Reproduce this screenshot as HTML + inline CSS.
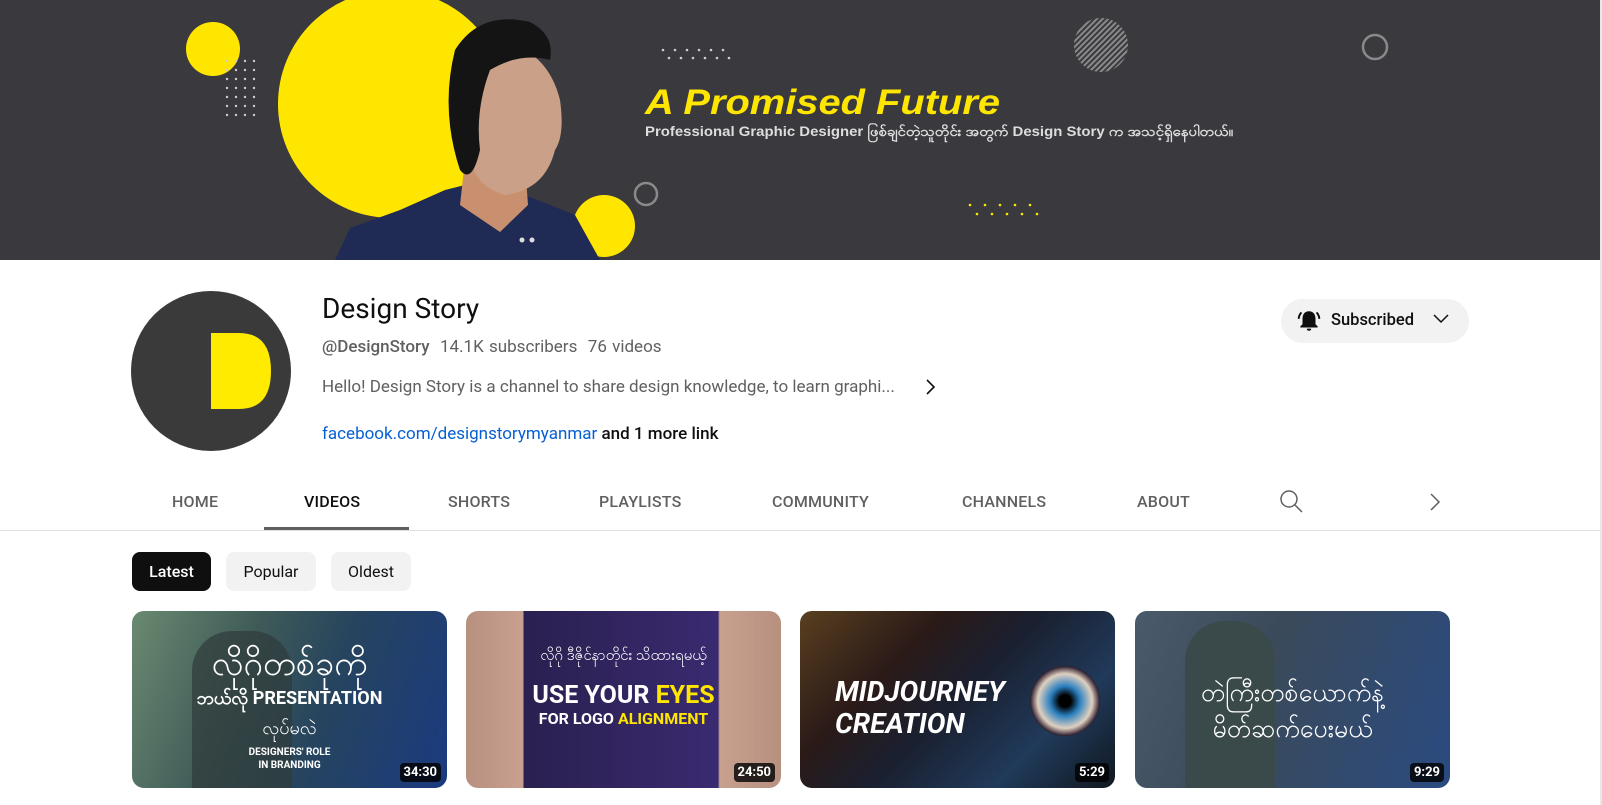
<!DOCTYPE html>
<html><head><meta charset="utf-8"><style>
*{margin:0;padding:0;box-sizing:border-box}
html,body{width:1602px;height:805px;overflow:hidden}
body{background:#fff;font-family:"Roboto","Liberation Sans","Noto Sans CJK SC",sans-serif;position:relative;color:#0f0f0f}
.a{position:absolute}
.banner{left:0;top:0;width:1600px;height:260px;background:#3a393e;overflow:hidden}
.tab{position:absolute;top:492px;font-size:16px;font-weight:500;color:#606060;letter-spacing:.2px}
.chip{position:absolute;top:552px;height:39px;border-radius:8px;background:#f2f2f2;font-size:16px;line-height:39px;text-align:center}
.th{position:absolute;top:611px;width:315px;height:177px;border-radius:12px;overflow:hidden}
.dur{position:absolute;right:6px;bottom:6px;background:rgba(0,0,0,.8);color:#fff;font-size:13px;font-weight:bold;padding:2px 4px;border-radius:4px}
</style></head><body>
<div class="a banner">
<svg width="1600" height="260" style="position:absolute;left:0;top:0">
<defs><pattern id="st" width="4" height="4" patternUnits="userSpaceOnUse" patternTransform="rotate(45)"><rect width="2" height="4" fill="#8a8a8a"/></pattern></defs>
<circle cx="213" cy="49" r="27" fill="#ffe600"/>
<circle cx="392" cy="104" r="114" fill="#ffe600"/>
<circle cx="604" cy="226" r="31" fill="#ffe600"/>
<circle cx="646" cy="194" r="11" fill="none" stroke="#8a8a8a" stroke-width="2.5"/>
<circle cx="1101" cy="45" r="27" fill="url(#st)"/>
<circle cx="1375" cy="47" r="12" fill="none" stroke="#8a8a8a" stroke-width="2.5"/>
<g fill="#ccc">
<circle cx="227" cy="61" r="1.2"/><circle cx="236" cy="61" r="1.2"/><circle cx="245" cy="61" r="1.2"/><circle cx="254" cy="61" r="1.2"/>
<circle cx="227" cy="70" r="1.2"/><circle cx="236" cy="70" r="1.2"/><circle cx="245" cy="70" r="1.2"/><circle cx="254" cy="70" r="1.2"/>
<circle cx="227" cy="79" r="1.2"/><circle cx="236" cy="79" r="1.2"/><circle cx="245" cy="79" r="1.2"/><circle cx="254" cy="79" r="1.2"/>
<circle cx="227" cy="88" r="1.2"/><circle cx="236" cy="88" r="1.2"/><circle cx="245" cy="88" r="1.2"/><circle cx="254" cy="88" r="1.2"/>
<circle cx="227" cy="97" r="1.2"/><circle cx="236" cy="97" r="1.2"/><circle cx="245" cy="97" r="1.2"/><circle cx="254" cy="97" r="1.2"/>
<circle cx="227" cy="106" r="1.2"/><circle cx="236" cy="106" r="1.2"/><circle cx="245" cy="106" r="1.2"/><circle cx="254" cy="106" r="1.2"/>
<circle cx="227" cy="115" r="1.2"/><circle cx="236" cy="115" r="1.2"/><circle cx="245" cy="115" r="1.2"/><circle cx="254" cy="115" r="1.2"/>
<circle cx="663" cy="50" r="1.3"/><circle cx="675" cy="50" r="1.3"/><circle cx="687" cy="50" r="1.3"/><circle cx="699" cy="50" r="1.3"/><circle cx="711" cy="50" r="1.3"/><circle cx="723" cy="50" r="1.3"/>
<circle cx="669" cy="58" r="1.3"/><circle cx="681" cy="58" r="1.3"/><circle cx="693" cy="58" r="1.3"/><circle cx="705" cy="58" r="1.3"/><circle cx="717" cy="58" r="1.3"/><circle cx="729" cy="58" r="1.3"/>
</g>
<g fill="#ffe600">
<circle cx="970" cy="205" r="1.3"/><circle cx="985" cy="205" r="1.3"/><circle cx="1000" cy="205" r="1.3"/><circle cx="1015" cy="205" r="1.3"/><circle cx="1030" cy="205" r="1.3"/>
<circle cx="977" cy="214" r="1.3"/><circle cx="992" cy="214" r="1.3"/><circle cx="1007" cy="214" r="1.3"/><circle cx="1022" cy="214" r="1.3"/><circle cx="1037" cy="214" r="1.3"/>
</g>
<path d="M335 260 L350 228 L400 210 L445 190 L485 180 L525 195 L575 215 L600 260 Z" fill="#1f2a55"/>
<path d="M465 160 L460 205 L500 232 L528 205 L525 165 Z" fill="#c9906f"/>
<path d="M480 40 Q545 40 560 100 Q565 135 555 150 Q545 190 505 195 Q470 185 470 150 Q455 110 480 40 Z" fill="#caa088"/>
<path d="M455 50 Q480 10 530 22 Q555 35 550 60 Q520 52 490 70 Q475 110 480 150 Q472 185 460 170 Q440 110 455 50 Z" fill="#141414"/>
<circle cx="522" cy="240" r="2.5" fill="#ddd"/><circle cx="532" cy="240" r="2.5" fill="#ddd"/>
<text x="645" y="114" fill="#ffe600" font-family="Liberation Sans,sans-serif" font-weight="bold" font-style="italic" font-size="35" textLength="355" lengthAdjust="spacingAndGlyphs">A Promised Future</text>
<text x="645" y="136" fill="#ddd" font-family="Liberation Sans,'Noto Sans CJK SC',sans-serif" font-size="13.5" font-weight="bold" textLength="588" lengthAdjust="spacingAndGlyphs">Professional Graphic Designer ဖြစ်ချင်တဲ့သူတိုင်း အတွက် Design Story က အသင့်ရှိနေပါတယ်။</text>
</svg>
</div>
<div class="a" style="left:1600px;top:0;width:2px;height:805px;background:#e8e8e8"></div>

<svg class="a" style="left:131px;top:291px" width="160" height="160"><circle cx="80" cy="80" r="80" fill="#3a3a3a"/><path d="M80 42 H108 Q140 42 140 80 Q140 118 108 118 H80 Z" fill="#ffeb00"/></svg>

<div class="a" style="left:322px;top:292px;font-size:28px;font-weight:400">Design Story</div>
<div class="a" style="left:322px;top:337px;font-size:17px;color:#606060;word-spacing:1px"><span style="font-weight:500">@DesignStory</span>&nbsp;&nbsp;14.1K subscribers&nbsp;&nbsp;76 videos</div>
<div class="a" style="left:322px;top:377px;font-size:17px;color:#606060">Hello! Design Story is a channel to share design knowledge, to learn graphi...</div>
<svg class="a" style="left:924px;top:378px" width="12" height="18"><path d="M3 2 L10 9 L3 16" fill="none" stroke="#0f0f0f" stroke-width="1.6"/></svg>
<div class="a" style="left:322px;top:424px;font-size:17px"><span style="color:#065fd4">facebook.com/designstorymyanmar</span> <span style="font-weight:500">and 1 more link</span></div>

<div class="a" style="left:1281px;top:299px;width:188px;height:44px;border-radius:22px;background:#f2f2f2"></div>
<svg class="a" style="left:1296px;top:308px" width="26" height="26" viewBox="0 0 24 24"><path d="M12 3 C8 3 6 6 6 10 V15 L4 17 V18 H20 V17 L18 15 V10 C18 6 16 3 12 3 Z M10 19 H14 Q14 21 12 21 Q10 21 10 19 Z" fill="#0f0f0f"/><path d="M5 4 Q2.5 7 2.5 10 M19 4 Q21.5 7 21.5 10" stroke="#0f0f0f" stroke-width="1.8" fill="none"/></svg>
<div class="a" style="left:1331px;top:311px;font-size:16.5px;font-weight:500">Subscribed</div>
<svg class="a" style="left:1432px;top:312px" width="18" height="14"><path d="M2 3 L9 10 L16 3" fill="none" stroke="#0f0f0f" stroke-width="1.5"/></svg>

<div class="tab" style="left:172px">HOME</div>
<div class="tab" style="left:304px;color:#0f0f0f">VIDEOS</div>
<div class="tab" style="left:448px">SHORTS</div>
<div class="tab" style="left:599px">PLAYLISTS</div>
<div class="tab" style="left:772px">COMMUNITY</div>
<div class="tab" style="left:962px">CHANNELS</div>
<div class="tab" style="left:1137px">ABOUT</div>
<svg class="a" style="left:1279px;top:489px" width="26" height="26"><circle cx="10" cy="10" r="8" fill="none" stroke="#606060" stroke-width="1.5"/><path d="M16 16 L23 23" stroke="#606060" stroke-width="1.5"/></svg>
<svg class="a" style="left:1428px;top:492px" width="14" height="20"><path d="M3 2 L11 10 L3 18" fill="none" stroke="#606060" stroke-width="1.5"/></svg>
<div class="a" style="left:264px;top:527px;width:145px;height:3px;background:#606060"></div>
<div class="a" style="left:0;top:530px;width:1600px;height:1px;background:#e0e0e0"></div>

<div class="chip" style="left:132px;width:79px;background:#0f0f0f;color:#fff;font-weight:500">Latest</div>
<div class="chip" style="left:226px;width:90px">Popular</div>
<div class="chip" style="left:331px;width:80px">Oldest</div>

<div class="th" style="left:132px;background:linear-gradient(110deg,#6a8a70 0%,#3e5a58 35%,#26445e 60%,#1a3a80 100%)">
<div class="a" style="left:60px;top:20px;width:100px;height:157px;background:#2f3a3a;border-radius:40px 40px 0 0;opacity:.7"></div>
<div class="a" style="left:0;top:30px;width:315px;text-align:center;color:#fff;font-size:34px;font-family:'Liberation Sans','Noto Sans CJK SC',sans-serif">လိုဂိုတစ်ခုကို</div>
<div class="a" style="left:0;top:75px;width:315px;text-align:center;color:#fff;font-size:18px;font-weight:bold">ဘယ်လို PRESENTATION</div>
<div class="a" style="left:0;top:105px;width:315px;text-align:center;color:#fff;font-size:18px">လုပ်မလဲ</div>
<div class="a" style="left:0;top:135px;width:315px;text-align:center;color:#fff;font-size:10px;font-weight:bold;line-height:13px">DESIGNERS' ROLE<br>IN BRANDING</div>
<div class="dur">34:30</div></div>

<div class="th" style="left:466px;background:linear-gradient(90deg,#b89080 0%,#c9a090 18%,#2a2050 18.5%,#3a2a70 80%,#c8a08e 80.5%,#b89080 100%)">
<div class="a" style="left:0;top:35px;width:315px;text-align:center;color:#fff;font-size:15px">လိုဂို ဒီဇိုင်နာတိုင်း သိထားရမယ့်</div>
<div class="a" style="left:0;top:70px;width:315px;text-align:center;color:#fff;font-size:25px;font-weight:bold">USE YOUR <span style="color:#ffe600">EYES</span></div>
<div class="a" style="left:0;top:98px;width:315px;text-align:center;color:#fff;font-size:16px;font-weight:bold">FOR LOGO <span style="color:#ffe600">ALIGNMENT</span></div>
<div class="dur">24:50</div></div>

<div class="th" style="left:800px;background:linear-gradient(135deg,#5a4020,#2a1a18 30%,#1a2030 50%,#203a5a 75%,#101820)">
<div class="a" style="left:230px;top:55px;width:70px;height:70px;border-radius:50%;background:radial-gradient(circle,#000 12%,#2a80c0 30%,#e0d0c0 55%,#302030 70%)"></div>
<div class="a" style="left:35px;top:65px;color:#fff;font-size:28px;font-weight:bold;font-style:italic;line-height:32px">MIDJOURNEY<br>CREATION</div>
<div class="dur">5:29</div></div>

<div class="th" style="left:1135px;background:linear-gradient(110deg,#4a5a6a 0%,#3a4a5a 40%,#2a4a80 100%)">
<div class="a" style="left:50px;top:10px;width:90px;height:167px;background:#3a4a4a;border-radius:40px 40px 0 0"></div>
<div class="a" style="left:0;top:65px;width:315px;text-align:center;color:#fff;font-size:25px;line-height:36px">တဲကြီးတစ်ယောက်နဲ့<br>မိတ်ဆက်ပေးမယ်</div>
<div class="dur">9:29</div></div>
</body></html>
